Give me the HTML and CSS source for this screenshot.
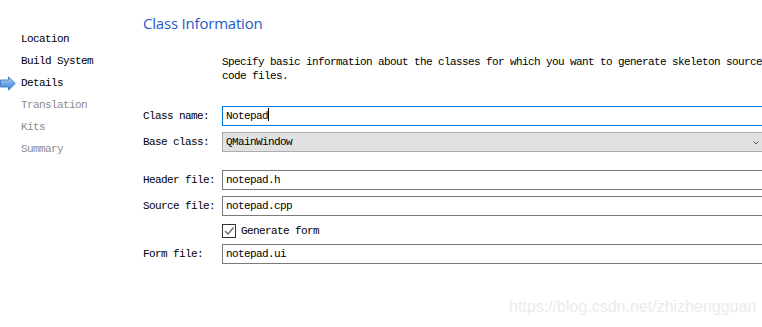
FILE: index.html
```html
<!DOCTYPE html>
<html lang="en">
<head>
  <meta charset="UTF-8" />
  <title>Class Information</title>
  <link rel="stylesheet" href="styles.css">
</head>
<body>
  <div class="wizard">
    <!-- step list -->
    <ul class="steps">
      <li class="step done"><span class="marker"></span>Location</li>
      <li class="step done"><span class="marker"></span>Build System</li>
      <li class="step current">
        <span class="marker">
          <svg width="16" height="15" viewBox="0 0 16 15">
            <defs>
              <linearGradient id="arrowFill" x1="0" y1="0" x2="0" y2="1">
                <stop offset="0" stop-color="#bcd8f6" />
                <stop offset="0.5" stop-color="#6fa6e6" />
                <stop offset="1" stop-color="#3f7fd0" />
              </linearGradient>
            </defs>
            <path d="M0.5 4 H8.5 V0.8 L15.2 7.5 L8.5 14.2 V11 H0.5 Z" fill="url(#arrowFill)" stroke="#4a80c8" stroke-width="1" stroke-linejoin="round" />
          </svg>
        </span>Details
      </li>
      <li class="step"><span class="marker"></span>Translation</li>
      <li class="step"><span class="marker"></span>Kits</li>
      <li class="step"><span class="marker"></span>Summary</li>
    </ul>

    <!-- page -->
    <div class="page">
      <h1 class="page-title">Class Information</h1>
      <p class="intro">Specify basic information about the classes for which you want to generate skeleton source code files.</p>

      <div class="form">
        <label class="form-label">Class name:</label>
        <div class="field focused">Notepad<span class="caret"></span></div>

        <label class="form-label">Base class:</label>
        <div class="field combo">QMainWindow
          <svg class="combo-arrow" width="6" height="4" viewBox="0 0 6 4"><path d="M0.5 0.5 L3 3 L5.5 0.5" fill="none" stroke="#555" stroke-width="1" /></svg>
        </div>

        <label class="form-label spaced">Header file:</label>
        <div class="field spaced">notepad.h</div>

        <label class="form-label">Source file:</label>
        <div class="field">notepad.cpp</div>

        <span></span>
        <div class="check-row">
          <span class="checkbox">
            <svg width="12" height="12" viewBox="0 0 12 12"><path d="M2 6 L5 9 L10.5 2.5" fill="none" stroke="#6b6b6b" stroke-width="1.4" /></svg>
          </span>
          Generate form
        </div>

        <label class="form-label">Form file:</label>
        <div class="field">notepad.ui</div>
      </div>
    </div>
  </div>

  <div class="watermark">https://blog.csdn.net/zhizhengguan</div>
</body>
</html>
```

FILE: styles.css
```css
:root {
  --ui-font: "Liberation Mono", "Noto Sans CJK SC", monospace;
  --title-blue: #1d5cc4;
  --field-border: #7a7a7a;
}

body {
  margin: 0;
  width: 762px;
  height: 327px;
  overflow: hidden;
  background: #fff;
  color: #000;
  font-family: var(--ui-font);
  font-size: 11px;
  letter-spacing: -0.6px;
  position: relative;
}

.wizard {
  display: grid;
  grid-template-columns: 143px 1fr;
}

/* step list */
.steps {
  list-style: none;
  margin: 0;
  padding: 28px 0 0 0;
}

.step {
  display: grid;
  grid-template-columns: 21px auto;
  align-items: center;
  height: 22px;
  color: #8c8c8c;
}

.step.done,
.step.current {
  color: #000;
}

.marker {
  display: flex;
  align-items: center;
}

.marker svg {
  display: block;
}

/* page */
.page {
  padding-top: 12px;
}

.page-title {
  margin: 0;
  font-family: "Open Sans", "Noto Sans", sans-serif;
  font-weight: 400;
  font-size: 15px;
  letter-spacing: -0.2px;
  line-height: 22px;
  color: var(--title-blue);
}

.intro {
  margin: 21px 0 0 79px;
  width: 560px;
  line-height: 14px;
}

.form {
  display: grid;
  grid-template-columns: 79px 546px;
  row-gap: 6px;
  align-items: center;
  margin-top: 23px;
}

.form-label {
  white-space: nowrap;
}

.spaced {
  margin-top: 12px;
}

.field {
  position: relative;
  height: 18px;
  line-height: 18px;
  padding: 0 3px;
  border: 1px solid var(--field-border);
  background: #fff;
}

.field.focused {
  border-color: #0078d7;
}

.caret {
  display: inline-block;
  width: 1px;
  height: 13px;
  background: #000;
  vertical-align: -2px;
}

.field.combo {
  background: #e1e1e1;
  border-color: #adadad;
}

.combo-arrow {
  position: absolute;
  right: 8px;
  top: 8px;
}

.check-row {
  display: flex;
  align-items: center;
  gap: 5px;
  height: 16px;
  padding-top: 1px;
  box-sizing: border-box;
}

.checkbox {
  display: flex;
  align-items: center;
  justify-content: center;
  width: 12px;
  height: 12px;
  border: 1px solid #333;
  background: #fff;
}

/* blog watermark over the dialog */
.watermark {
  position: absolute;
  left: 509px;
  top: 298px;
  font-family: "Liberation Sans", sans-serif;
  font-size: 16px;
  letter-spacing: 0;
  color: #ebebeb;
}
```
